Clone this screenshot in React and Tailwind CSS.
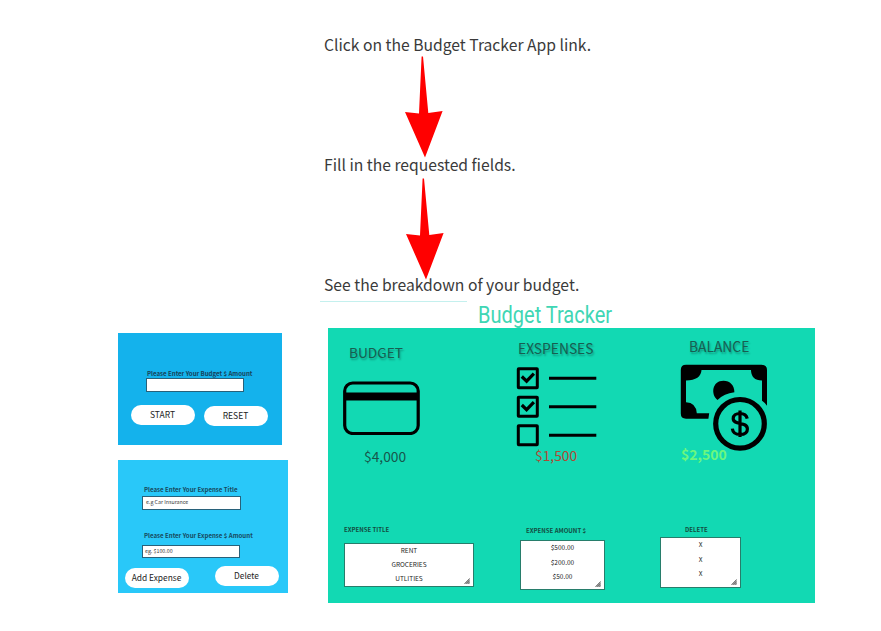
import React from "react";
import clsx from "clsx";

function Text({ className, children }) {
  return (
    <div className={clsx("flex shrink-0 items-center whitespace-nowrap", className)}>
      <span>{children}</span>
    </div>
  );
}

function Arrow({ className }) {
  return (
    <svg className={clsx("block shrink-0", className)} width="40" height="102" viewBox="0 0 40 102">
      <path d="M17.6 0.5H19L24.3 57L38.6 55L21 101.5L1 56L15 57.4Z" fill="#ff0000" />
    </svg>
  );
}

function Grip() {
  return (
    <svg className="absolute right-[3px] bottom-[2px]" width="6" height="6" viewBox="0 0 6 6">
      <path d="M0.4 5.8L5.6 0.4V5.8Z" fill="#999" />
      <path d="M0.4 5.8L5.6 0.4M2.4 5.8L5.6 2.6M4.3 5.8L5.6 4.6" stroke="#666" strokeWidth="0.8" />
    </svg>
  );
}

function Pill({ className, children }) {
  return (
    <button className={clsx("flex h-5 w-16 shrink-0 items-center justify-center rounded-full bg-white pr-px pb-[2px] text-[#222] whitespace-nowrap", className)}>
      {children}
    </button>
  );
}

function ListBox({ className, items }) {
  return (
    <div className={clsx("relative flex shrink-0 flex-col border border-[#277d6b] bg-white text-center text-[6.5px] text-[#222]", className)}>
      {items.map((item, i) => (
        <span key={i} className="h-[14.5px] leading-[13px]">{item}</span>
      ))}
      <Grip />
    </div>
  );
}

function CardIcon({ className }) {
  return (
    <svg className={clsx("block shrink-0", className)} width="78" height="54" viewBox="0 0 78 54">
      <rect x="1.7" y="2" width="73.5" height="50.5" rx="8" fill="none" stroke="#000" strokeWidth="3.2" />
      <path d="M2 11.5H75.2V19.5H2Z" />
    </svg>
  );
}

function ChecklistIcon({ className }) {
  return (
    <svg className={clsx("block shrink-0", className)} width="81" height="80" viewBox="-0.6 0 81 80" fill="none" stroke="#000" strokeWidth="3">
      {[0, 28.5, 57].map((y) => (
        <g key={y}>
          <rect x="1.7" y={y + 1.7} width="19" height="19" rx="0.4" />
          <path d={`M32.4 ${y + 11.2}H79.7`} />
        </g>
      ))}
      <path d="M5.2 9.5L10 14.2L17.3 6.7M5.2 38L10 42.7L17.3 35.2" strokeWidth="3.2" />
    </svg>
  );
}

function MoneyIcon({ className }) {
  return (
    <svg className={clsx("block shrink-0", className)} width="88" height="88" viewBox="0 0 88 88">
      <path
        fillRule="evenodd"
        d="M6 0.8H81.5Q87 0.8 87 6V41.8Q84.8 38.6 82 36.8V16.5Q71 16.2 71 6H21.5Q21 16 6 16.5V38.2Q16 38.5 16.8 49.3H29.2L28.4 54.7H6Q0.8 54.7 0.8 49.5V6Q0.8 0.8 6 0.8Z"
      />
      <path d="M37.5 36C30.5 30.5 32 16.8 43.5 16.8C50 16.8 54.4 21.5 54.4 28.2C47.5 29 42 31.5 37.5 36Z" />
      <circle cx="60" cy="59.8" r="24.3" fill="none" stroke="#000" strokeWidth="5.2" />
      <path d="M67.2 54.6C66.5 51 63.8 49.5 60 49.5C56 49.5 53.2 51.3 53.2 54.5C53.2 62 67.4 57 67.4 65C67.4 68.6 64.4 70.5 60 70.5C55.8 70.5 52.8 68.3 52.3 64.6M60 46.5V73" fill="none" stroke="#000" strokeWidth="3.2" />
    </svg>
  );
}

export default function App() {
  return (
    <main className="flex h-[631px] w-[881px] flex-col overflow-hidden bg-white font-['Noto_Sans_CJK_SC','Open_Sans',sans-serif] text-[#3a3a3a]">
      <section className="flex h-[301px] shrink-0 flex-col pt-[35px] pl-[324px] text-[15.7px]">
        <Text className="h-5">Click on the Budget Tracker App link.</Text>
        <Arrow className="mt-[1px] ml-[80px]" />
        <Text className="-mt-[3px] h-5">Fill in the requested fields.</Text>
        <Arrow className="mt-[3px] ml-[81px]" />
        <Text className="-mt-[5px] h-5">See the breakdown of your budget.</Text>
      </section>

      <div className="ml-[320px] h-px w-[147px] shrink-0 bg-[#c4f0ee]" />
      <div className="h-[26px] shrink-0 pt-px pl-[478px]">
        <h1 className="w-max origin-left scale-x-[0.87] font-['Roboto',sans-serif] text-[23px] leading-[26px] whitespace-nowrap text-[#3fd6b4]">Budget Tracker</h1>
      </div>

      <div className="flex shrink-0">
        <div className="flex w-[328px] shrink-0 flex-col pt-[5px] pl-[118px]">
          <section className="flex h-[112px] w-[164px] flex-col bg-[#14b2ec]">
            <Text className="mt-[36px] ml-[29px] h-[9px] text-[6.1px] font-bold text-[#17425a]">Please Enter Your Budget $ Amount</Text>
            <div className="ml-[28px] h-[14px] w-[98px] border border-[#28617a] bg-white" />
            <div className="mt-[13px] flex gap-[9px] pl-[13px] text-[8.5px]">
              <Pill>START</Pill>
              <Pill className="mt-px">RESET</Pill>
            </div>
          </section>
          <section className="mt-[15px] flex h-[133px] w-[170px] flex-col bg-[#29c8f9]">
            <Text className="mt-[26px] ml-[26px] h-[9px] pb-px text-[6.1px] font-bold text-[#174a60]">Please Enter Your Expense Title</Text>
            <Text className="mt-[1px] ml-[24px] h-[14px] w-[99px] border border-[#28617a] bg-white pl-[3px] text-[5.3px]">e.g Car Insurance</Text>
            <Text className="mt-[21px] ml-[26px] h-[9px] text-[6.1px] font-bold text-[#174a60]">Please Enter Your Expense $ Amount</Text>
            <Text className="mt-[5px] ml-[24px] h-[13px] w-[98px] border border-[#28617a] bg-white pl-[2px] text-[5.3px]">eg. $100.00</Text>
            <div className="mt-[8px] flex gap-[26px] pl-[7px] text-[8.4px]">
              <Pill className="mt-[2px]">Add Expense</Pill>
              <Pill className="pr-[3px]">Delete</Pill>
            </div>
          </section>
        </div>

        <section className="flex h-[275px] w-[487px] shrink-0 bg-[#12d9b3]">
          <div className="flex w-[182px] flex-col">
            <Text className="mt-[15px] ml-[21px] h-5 pb-[2px] text-[13.7px] text-[#175e51] text-shadow-[1px_2px_2px_rgb(0_0_0/0.3)]">BUDGET</Text>
            <CardIcon className="mt-[18px] ml-[15px]" />
            <Text className="mt-[12px] ml-[36px] h-5 pb-[2px] text-[13.8px] text-[#17564b]">$4,000</Text>
            <Text className="mt-[58px] ml-[16px] h-[10px] pb-[2px] text-[6px] font-bold text-[#124d42]">EXPENSE TITLE</Text>
            <ListBox className="mt-[8px] ml-[16px] h-[44px] w-[130px]" items={["RENT", "GROCERIES", "UTLITIES"]} />
          </div>
          <div className="flex w-[140px] flex-col">
            <Text className="mt-[11px] ml-[8px] h-5 pb-[2px] text-[13.8px] text-[#175e51] text-shadow-[1px_2px_2px_rgb(0_0_0/0.3)]">EXSPENSES</Text>
            <ChecklistIcon className="mt-[8px] ml-[6px]" />
            <Text className="-mt-px ml-[25px] h-5 pb-[2px] text-[13.8px] text-[#b04a35]">$1,500</Text>
            <Text className="mt-[60px] ml-[16px] h-[10px] text-[6.05px] font-bold text-[#124d42]">EXPENSE AMOUNT $</Text>
            <ListBox className="mt-[4px] ml-[10px] h-[50px] w-[85px]" items={["$500.00", "$200.00", "$50.00"]} />
          </div>
          <div className="flex w-[165px] flex-col">
            <Text className="mt-[9px] ml-[39px] h-5 pb-[2px] text-[13.8px] text-[#175e51] text-shadow-[1px_2px_2px_rgb(0_0_0/0.3)]">BALANCE</Text>
            <MoneyIcon className="mt-[7px] ml-[30px]" />
            <Text className="-mt-[7px] ml-[31px] h-5 pb-[2px] text-[14px] font-bold text-[#6cf77e]">$2,500</Text>
            <Text className="mt-[60px] ml-[35px] h-[10px] pb-[2px] text-[6px] font-bold text-[#124d42]">DELETE</Text>
            <ListBox className="mt-[2px] ml-[10px] h-[51px] w-[81px]" items={["X", "X", "X"]} />
          </div>
        </section>
      </div>
    </main>
  );
}
